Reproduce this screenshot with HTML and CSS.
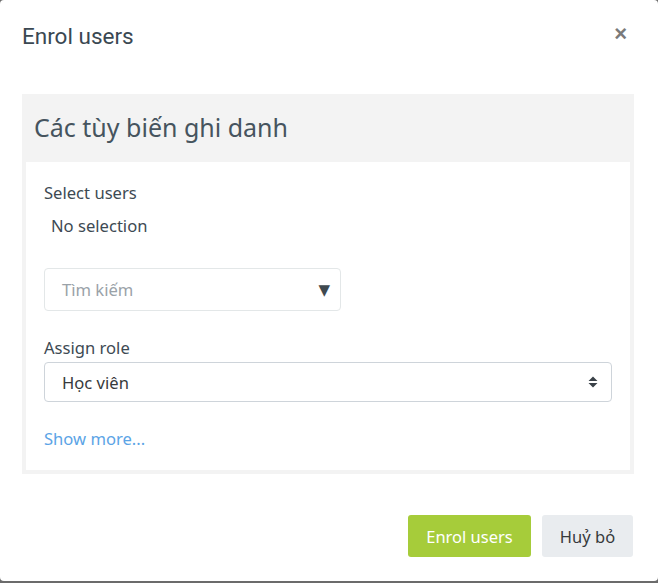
FILE: index.html
```html
<!DOCTYPE html>
<html lang="vi">
<head>
<meta charset="utf-8">
<title>Enrol users</title>
<link rel="stylesheet" href="styles.css">
</head>
<body>
<div class="modal">
  <div class="modal-header">
    <h5 class="modal-title">Enrol users</h5>
    <span class="close">&times;</span>
  </div>
  <div class="modal-body">
    <div class="fieldset">
      <div class="legend">Các tùy biến ghi danh</div>
      <div class="inner">
        <div class="label">Select users</div>
        <div class="noselection">No selection</div>
        <div class="search">
          <span class="placeholder">Tìm kiếm</span>
          <span class="down">&#9660;</span>
        </div>
        <div class="label role-label">Assign role</div>
        <div class="select">
          <span>Học viên</span>
          <svg class="updown" width="10" height="12" viewBox="0 0 10 12"><path d="M5 0.5 L9.5 5 H0.5 Z M0.5 7 H9.5 L5 11.5 Z" fill="#3a4148"/></svg>
        </div>
        <a class="more" href="#">Show more...</a>
      </div>
    </div>
  </div>
  <div class="modal-footer">
    <button class="btn btn-primary">Enrol users</button>
    <button class="btn btn-secondary">Huỷ bỏ</button>
  </div>
</div>
</body>
</html>
```
FILE: styles.css
```css
html, body {
  margin: 0;
  padding: 0;
}
body {
  background: #6b6b6b;
  font-family: "Noto Sans", "Open Sans", sans-serif;
  color: #3d4a53;
  width: 658px;
  height: 583px;
  overflow: hidden;
}
.modal {
  width: 658px;
  height: 581px;
  background: #fff;
  border-radius: 4px;
  display: flex;
  flex-direction: column;
}
.modal-header {
  display: flex;
  justify-content: space-between;
  align-items: flex-start;
  padding: 22px 31px 0 22px;
  height: 72px;
  box-sizing: border-box;
}
.modal-title {
  margin: 0;
  font-family: Roboto, "Noto Sans", sans-serif;
  font-weight: 400;
  font-size: 22.5px;
  line-height: 28px;
  color: #3a4852;
}
.close {
  font-family: "Liberation Sans", Arial, sans-serif;
  font-weight: 700;
  font-size: 22px;
  line-height: 22px;
  color: #7a7a7a;
  margin-top: 1px;
}
.modal-body {
  padding: 22px 24px 0 22px;
}
.fieldset {
  background: #f3f3f3;
  padding: 0 4px 4px 4px;
}
.legend {
  height: 68px;
  line-height: 66px;
  font-size: 25px;
  padding-left: 8px;
  color: #46545e;
}
.inner {
  background: #fff;
  height: 308px;
  padding: 20px 18px 0 18px;
  box-sizing: border-box;
}
.label {
  font-size: 16.6px;
  line-height: 22px;
  color: #3d4a53;
}
.noselection {
  font-size: 16.6px;
  line-height: 22px;
  padding-left: 7px;
  margin-top: 11px;
  color: #3d4a53;
}
.search {
  margin-top: 31px;
  width: 297px;
  height: 43px;
  box-sizing: border-box;
  border: 1px solid #e3e7e8;
  border-radius: 4px;
  display: flex;
  align-items: center;
  justify-content: space-between;
  padding: 0 10px 0 17px;
}
.placeholder {
  font-size: 16.6px;
  color: #9aa2a8;
}
.down {
  font-size: 15px;
  color: #3f4950;
  font-family: "DejaVu Sans", sans-serif;
}
.role-label {
  margin-top: 26px;
}
.select {
  margin-top: 3px;
  width: 568px;
  height: 40px;
  box-sizing: border-box;
  border: 1px solid #ced4da;
  border-radius: 4px;
  display: flex;
  align-items: center;
  justify-content: space-between;
  padding: 0 13px 0 17px;
  font-size: 16.6px;
  color: #373a3c;
}
.updown {
  display: block;
}
.more {
  display: block;
  margin-top: 26px;
  font-size: 16.6px;
  line-height: 22px;
  color: #5ba4e6;
  text-decoration: none;
}
.modal-footer {
  display: flex;
  justify-content: flex-end;
  gap: 11px;
  padding: 41px 25px 0 0;
}
.btn {
  height: 42px;
  border: none;
  border-radius: 3px;
  font-family: "Noto Sans", "Open Sans", sans-serif;
  font-size: 16.5px;
  padding: 0;
  cursor: pointer;
}
.btn-primary {
  background: #a6cc3a;
  color: #fff;
  width: 123px;
}
.btn-secondary {
  background: #e9ecef;
  color: #373a3c;
  width: 91px;
}
```
